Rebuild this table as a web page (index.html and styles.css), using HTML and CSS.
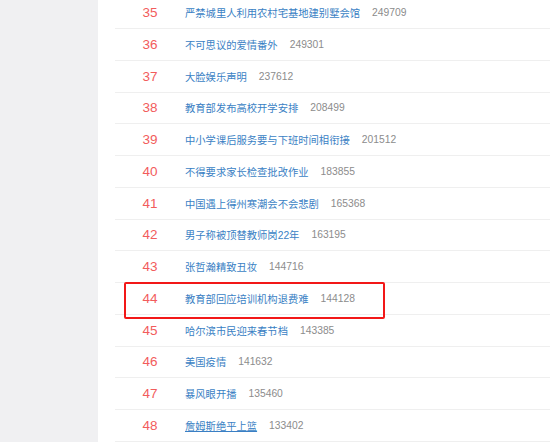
FILE: index.html
```
<!DOCTYPE html>
<html lang="zh-CN">
<head>
    <meta charset="UTF-8">
    <meta name="viewport" content="width=device-width, initial-scale=1.0">
    <title>热搜榜</title>
    <link rel="stylesheet" href="styles.css">
</head>
<body>
    <div class="page">
        <aside class="sidebar"></aside>

        <main class="main">
            <ul class="hot-list">
                <li class="hot-item"><span class="rank">35</span><a class="title" href="#">严禁城里人利用农村宅基地建别墅会馆</a><span class="count">249709</span></li>
                <li class="hot-item"><span class="rank">36</span><a class="title" href="#">不可思议的爱情番外</a><span class="count">249301</span></li>
                <li class="hot-item"><span class="rank">37</span><a class="title" href="#">大脸娱乐声明</a><span class="count">237612</span></li>
                <li class="hot-item"><span class="rank">38</span><a class="title" href="#">教育部发布高校开学安排</a><span class="count">208499</span></li>
                <li class="hot-item"><span class="rank">39</span><a class="title" href="#">中小学课后服务要与下班时间相衔接</a><span class="count">201512</span></li>
                <li class="hot-item"><span class="rank">40</span><a class="title" href="#">不得要求家长检查批改作业</a><span class="count">183855</span></li>
                <li class="hot-item"><span class="rank">41</span><a class="title" href="#">中国遇上得州寒潮会不会悲剧</a><span class="count">165368</span></li>
                <li class="hot-item"><span class="rank">42</span><a class="title" href="#">男子称被顶替教师岗22年</a><span class="count">163195</span></li>
                <li class="hot-item"><span class="rank">43</span><a class="title" href="#">张哲瀚精致丑妆</a><span class="count">144716</span></li>
                <li class="hot-item marked"><span class="rank">44</span><a class="title" href="#">教育部回应培训机构退费难</a><span class="count">144128</span></li>
                <li class="hot-item"><span class="rank">45</span><a class="title" href="#">哈尔滨市民迎来春节档</a><span class="count">143385</span></li>
                <li class="hot-item"><span class="rank">46</span><a class="title" href="#">美国疫情</a><span class="count">141632</span></li>
                <li class="hot-item"><span class="rank">47</span><a class="title" href="#">暴风眼开播</a><span class="count">135460</span></li>
                <li class="hot-item"><span class="rank">48</span><a class="title hover" href="#">詹姆斯绝平上篮</a><span class="count">133402</span></li>
            </ul>
        </main>
    </div>
</body>
</html>
```

FILE: styles.css
```
* {
    margin: 0;
    padding: 0;
    box-sizing: border-box;
}

body {
    background-color: #fff;
    font-family: "Liberation Sans", "Noto Sans CJK SC", sans-serif;
    overflow: hidden;
}

.page {
    display: flex;
    height: 442px;
}

.sidebar {
    width: 98px;
    flex-shrink: 0;
    background-color: #f0f0f2;
}

.main {
    flex: 1;
    background-color: #fff;
    overflow: hidden;
}

.hot-list {
    list-style: none;
    margin-top: -2.75px;
    margin-left: 17px;
}

.hot-item {
    position: relative;
    display: flex;
    align-items: center;
    height: 31.75px;
    border-bottom: 1px solid #efefef;
}

.rank {
    width: 70px;
    flex-shrink: 0;
    text-align: center;
    font-size: 13.5px;
    color: #f25c5c;
}

.title {
    font-size: 10.3px;
    color: #3a7fc4;
    text-decoration: none;
}

.title.hover {
    text-decoration: underline;
}

.count {
    margin-left: 12px;
    font-size: 10.3px;
    color: #8c8c8c;
}

/* red box drawn over the highlighted row */
.marked::after {
    content: "";
    position: absolute;
    left: 9px;
    top: -1px;
    width: 257px;
    height: 33px;
    border: 2px solid #f21818;
    border-radius: 2px;
}
```
